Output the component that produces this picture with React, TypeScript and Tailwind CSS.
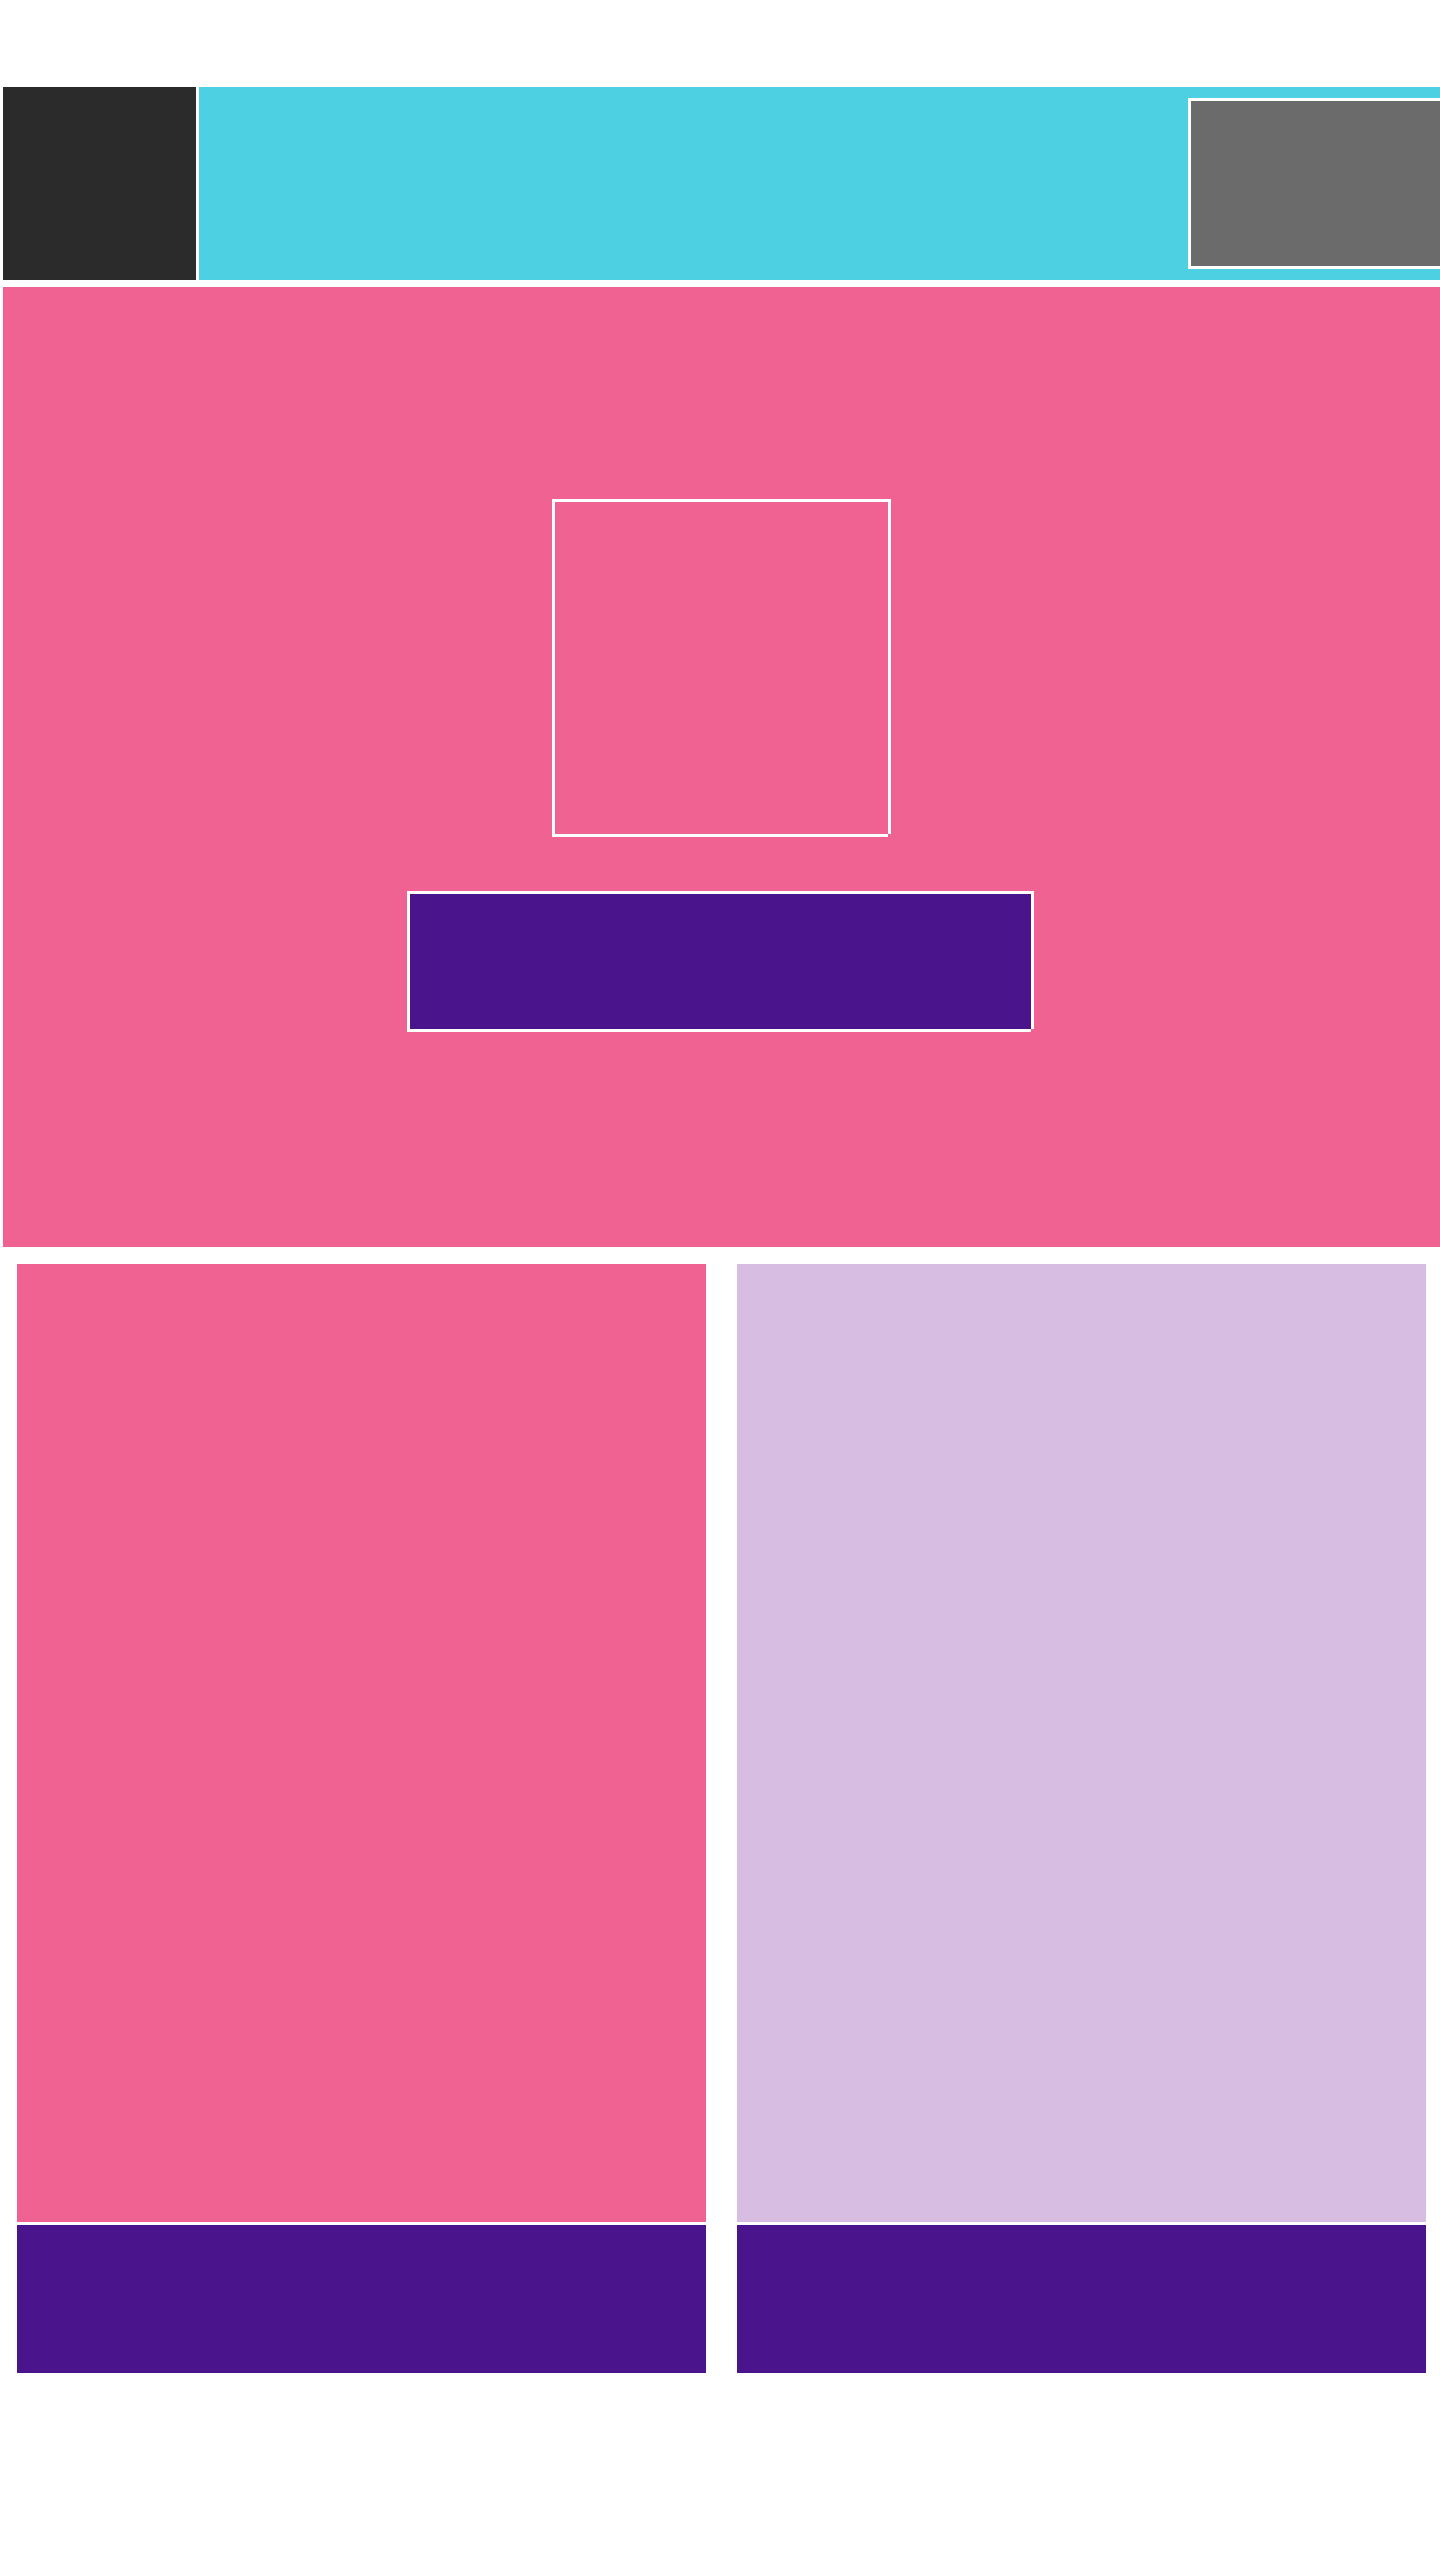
const PINK = 'bg-[#f06292]';

const Card = ({ tone }: { tone: string }) => (
  <div className="flex flex-col gap-[3px]">
    <div className={`h-[958px] ${tone}`} />
    <div className="h-[148px] bg-[#4a148c]" />
  </div>
);

const App = () => {
  return (
    <div className="min-h-[2560px] w-full overflow-hidden bg-white pt-[87px] pl-[3px]">
      {/* Header */}
      <header className="flex h-[193px]">
        <div className="w-[196px] shrink-0 border-r-[3px] border-white bg-[#2b2b2b]" />
        <div className="flex flex-1 items-center overflow-hidden bg-[#4dd0e1] pl-[989px]">
          <div className="h-[171px] w-[290px] shrink-0 border-[3px] border-white bg-[#6b6b6b]" />
        </div>
      </header>

      {/* Hero */}
      <section className={`mt-[7px] flex h-[960px] flex-col items-center gap-[54px] pt-[212px] ${PINK}`}>
        <div className="flex h-[338px] w-[339px] flex-col border-l-[3px] border-t-[3px] border-white">
          <div className="h-[332px] border-r-[3px] border-white" />
          <div className="h-[3px] w-[333px] bg-white" />
        </div>
        <button className="-ml-[2px] flex h-[141px] w-[627px] flex-col border-l-[3px] border-t-[3px] border-white">
          <div className="h-[135px] w-full border-r-[3px] border-white bg-[#4a148c]" />
          <div className="h-[3px] w-[621px] bg-white" />
        </button>
      </section>

      {/* Cards */}
      <section className="mt-[17px] grid grid-cols-2 gap-[31px] px-[14px]">
        <Card tone={PINK} />
        <Card tone="bg-[#d7bde2]" />
      </section>
    </div>
  );
};

export default App;
